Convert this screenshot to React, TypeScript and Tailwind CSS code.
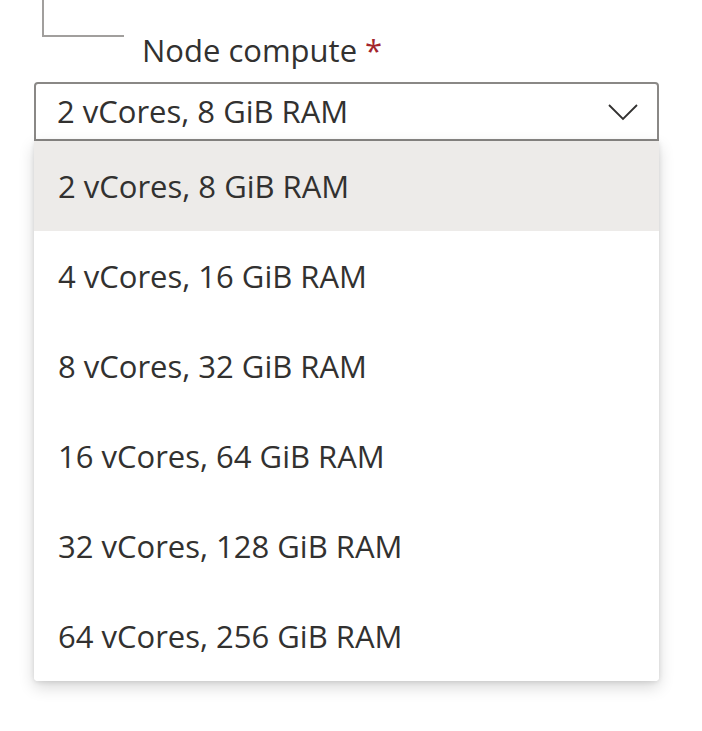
import { useState } from 'react'

const options = [
  '2 vCores, 8 GiB RAM',
  '4 vCores, 16 GiB RAM',
  '8 vCores, 32 GiB RAM',
  '16 vCores, 64 GiB RAM',
  '32 vCores, 128 GiB RAM',
  '64 vCores, 256 GiB RAM',
]

export default function App() {
  const [selected] = useState(0)

  return (
    <div className="min-h-[731px] w-[702px] bg-white text-[#323130] font-['Open_Sans',sans-serif]">
      {/* Partial box above */}
      <div className="ml-[42px] h-[37px] w-[82px] border-b-2 border-l-2 border-[#a19f9d]" />

      <div className="ml-[34px] w-[625px]">
        {/* Label */}
        <div className="flex h-[45px] items-center pb-[19px] pl-[108px] text-[31px] leading-none">
          <span>Node compute</span>
          <span className="ml-[8px] text-[#a4262c]">*</span>
        </div>

        {/* Dropdown field */}
        <div className="relative">
          <div className="flex h-[59px] items-center justify-between rounded-t-[4px] border-2 border-[#8a8886] bg-white pl-[21px] pr-[18px] text-[31px]">
            <span>{options[selected]}</span>
            <svg width="32" height="20" viewBox="0 0 32 20" fill="none">
              <path d="M2 3 L16 17 L30 3" stroke="#323130" strokeWidth="1.8" />
            </svg>
          </div>

          {/* Menu */}
          <div className="absolute left-0 top-[59px] w-[625px] overflow-hidden rounded-b-[4px] bg-white shadow-[0_6px_16px_rgba(0,0,0,0.16),0_1px_5px_rgba(0,0,0,0.1)]">
            {options.map((o, i) => (
              <div
                key={o}
                className={`flex h-[90px] items-center pl-[24px] text-[31px] ${i === selected ? 'bg-[#edebe9]' : 'bg-white'}`}
              >
                {o}
              </div>
            ))}
          </div>
        </div>
      </div>
    </div>
  )
}
